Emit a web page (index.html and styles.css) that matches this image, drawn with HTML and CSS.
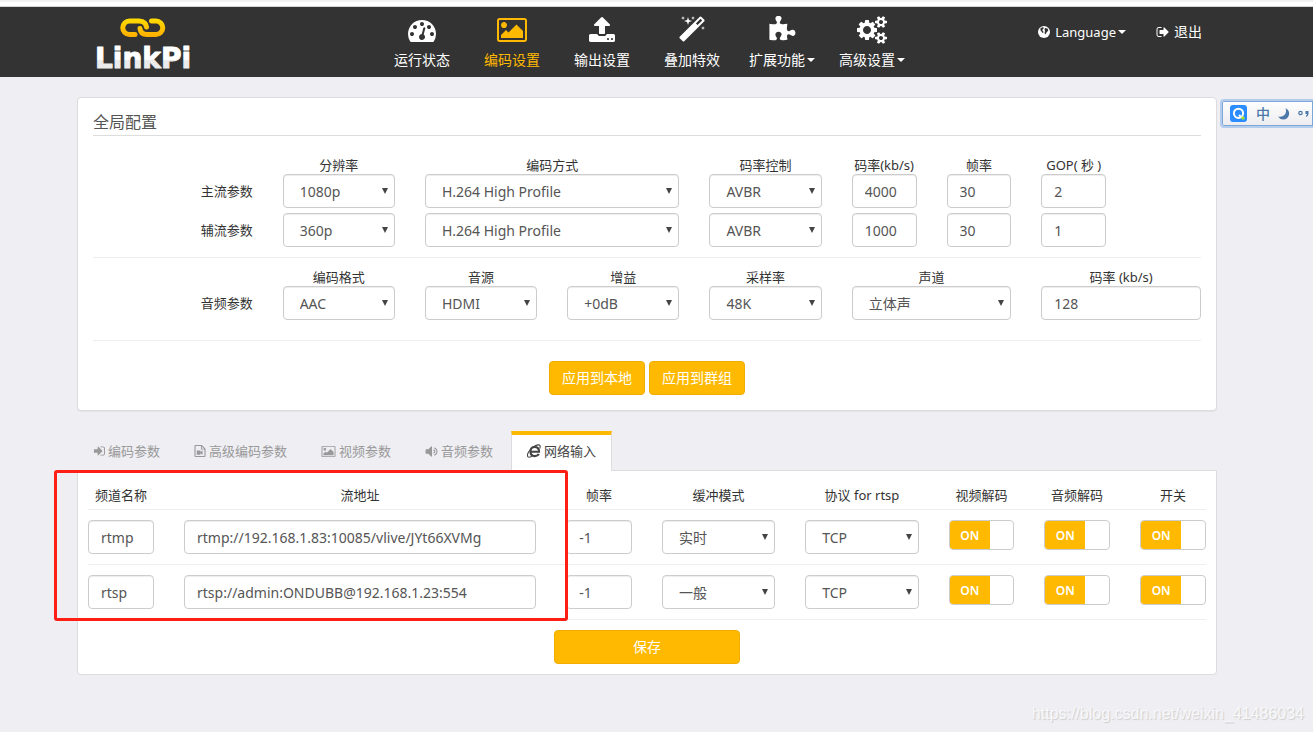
FILE: index.html
```html
<!DOCTYPE html>
<html lang="zh-CN">
<head>
<meta charset="utf-8">
<meta name="viewport" content="width=device-width, initial-scale=1">
<title>LinkPi</title>
<link rel="stylesheet" href="styles.css">
</head>
<body>
<svg class="defs" aria-hidden="true">
  <symbol id="i-picture" viewBox="0 0 1920 1792"><path d="M640 576q0 80-56 136t-136 56-136-56-56-136 56-136 136-56 136 56 56 136zm1024 384v448h-1408v-192l320-320 160 160 512-512zm96-704h-1600q-13 0-22.5 9.5t-9.5 22.5v1216q0 13 9.5 22.5t22.5 9.5h1600q13 0 22.5-9.5t9.5-22.5v-1216q0-13-9.5-22.5t-22.5-9.5zm160 32v1216q0 66-47 113t-113 47h-1600q-66 0-113-47t-47-113v-1216q0-66 47-113t113-47h1600q66 0 113 47t47 113z"/></symbol>
</svg>
<div class="topline"></div>
<header class="navbar">
  <div class="container nav-grid">
    <a class="logo" href="#" aria-label="LinkPi">
      <svg width="104" height="62" viewBox="0 0 104 62">
        <defs>
          <linearGradient id="gold" gradientUnits="userSpaceOnUse" x1="0" y1="2" x2="0" y2="22"><stop offset="0" stop-color="#ffe000"/><stop offset="1" stop-color="#ffae00"/></linearGradient>
          <linearGradient id="silver" gradientUnits="userSpaceOnUse" x1="0" y1="30" x2="0" y2="54"><stop offset=".6" stop-color="#fff"/><stop offset=".65" stop-color="#ebebec"/></linearGradient>
        </defs>
        <g fill="none" stroke="url(#gold)" stroke-width="5" stroke-linecap="round">
          <path d="M39 19.500H33.500a6.750 6.750 0 0 1 0-13.500H43Q50 6.500 50.500 12"/>
          <path d="M55.500 6H60a6.750 6.750 0 0 1 0 13.500H51Q44.500 19.500 44 13.500"/>
        </g>
        <text class="logo-text" x="-1" y="53">LinkPi</text>
      </svg>
    </a>
    <nav class="menu">
      <a href="#"><svg class="ic-lg" viewBox="0 0 1792 1792"><path d="M384 1152q0-53-37.5-90.5t-90.500-37.500-90.500 37.500-37.500 90.500 37.500 90.500 90.500 37.500 90.500-37.500 37.500-90.500zm192-448q0-53-37.500-90.500t-90.500-37.500-90.500 37.500-37.500 90.500 37.500 90.500 90.500 37.500 90.500-37.500 37.500-90.500zm428 481l101-382q6-26-7.500-48.500t-38.500-29.500-48 6.500-30 39.500l-101 382q-60 5-107 43.500t-63 98.500q-20 77 20 146t117 89 146-20 89-117q16-60-6-117t-72-91zm660-33q0-53-37.500-90.500t-90.500-37.500-90.500 37.500-37.500 90.500 37.500 90.500 90.500 37.500 90.500-37.500 37.500-90.500zm-640-640q0-53-37.500-90.500t-90.500-37.500-90.500 37.500-37.500 90.500 37.500 90.500 90.500 37.500 90.500-37.500 37.500-90.500zm448 192q0-53-37.500-90.500t-90.500-37.500-90.500 37.500-37.500 90.500 37.500 90.500 90.500 37.500 90.500-37.500 37.500-90.500zm320 448q0 261-141 483-19 29-54 29h-1402q-35 0-54-29-141-221-141-483 0-182 71-348t191-286 286-191 348-71 348 71 286 191 191 286 71 348z"/></svg><span>运行状态</span></a>
      <a href="#" class="active"><svg class="ic-lg wide"><use href="#i-picture"/></svg><span>编码设置</span></a>
      <a href="#"><svg class="ic-lg" viewBox="0 0 1792 1792"><path d="M1344 1472q0-26-19-45t-45-19-45 19-19 45 19 45 45 19 45-19 19-45zm256 0q0-26-19-45t-45-19-45 19-19 45 19 45 45 19 45-19 19-45zm128-224v320q0 40-28 68t-68 28h-1472q-40 0-68-28t-28-68v-320q0-40 28-68t68-28h427q21 56 70.500 92t110.500 36h256q61 0 110.500-36t70.500-92h427q40 0 68 28t28 68zm-325-648q-17 40-59 40h-256v448q0 26-19 45t-45 19h-256q-26 0-45-19t-19-45v-448h-256q-42 0-59-40-17-39 14-69l448-448q18-19 45-19t45 19l448 448q31 30 14 69z"/></svg><span>输出设置</span></a>
      <a href="#"><svg class="ic-lg" viewBox="0 0 1792 1792"><path d="M1254 581l293-293-107-107-293 293zm447-293q0 27-18 45l-1286 1286q-18 18-45 18t-45-18l-198-198q-18-18-18-45t18-45l1286-1286q18-18 45-18t45 18l198 198q18 18 18 45zm-1351-190l98 30-98 30-30 98-30-98-98-30 98-30 30-98zm350 162l196 60-196 60-60 196-60-196-196-60 196-60 60-196zm930 478l98 30-98 30-30 98-30-98-98-30 98-30 30-98zm-640-640l98 30-98 30-30 98-30-98-98-30 98-30 30-98z"/></svg><span>叠加特效</span></a>
      <a href="#"><svg class="ic-lg" viewBox="0 0 1792 1792"><path d="M1755 1083q0 81-44.500 135t-123.500 54q-41 0-77.500-17.500t-59-38-56.500-38-71-17.500q-110 0-110 124 0 39 16 115t15 115v5q-22 0-33 1-34 3-97.500 11.500t-115.500 13.500-98 5q-61 0-103-26.500t-42-83.500q0-37 17.500-71t38-56.500 38-59 17.500-77.500q0-79-54-123.500t-135-44.500q-84 0-143 45.500t-59 127.500q0 43 15 83t33.500 64.500 33.500 53 15 50.500q0 45-46 89-37 35-117 35-95 0-245-24-9-2-27.500-4t-27.500-4l-13-2q-1 0-3-1-2 0-2-1v-1024q2 1 17.500 3.500t34 5 21.500 3.500q150 24 245 24 80 0 117-35 46-44 46-89 0-22-15-50.500t-33.500-53-33.500-64.500-15-83q0-82 59-127.500t144-45.500q80 0 134 44.500t54 123.500q0 41-17.500 77.500t-38 59-38 56.500-17.500 71q0 57 42 83.500t103 26.500q64 0 180-15t163-17v2q-1 2-3.500 17.500t-5 34-3.500 21.500q-24 150-24 245 0 80 35 117 44 46 89 46 22 0 50.500-15t53-33.500 64.500-33.500 83-15q82 0 127.500 59t45.500 143z"/></svg><span class="caret">扩展功能</span></a>
      <a href="#"><svg class="ic-lg wide" viewBox="0 0 1920 1792"><path d="M896 896q0-106-75-181t-181-75-181 75-75 181 75 181 181 75 181-75 75-181zm768 512q0-52-38-90t-90-38-90 38-38 90q0 53 37.500 90.500t90.500 37.500 90.500-37.500 37.500-90.500zm0-1024q0-52-38-90t-90-38-90 38-38 90q0 53 37.500 90.500t90.500 37.500 90.500-37.500 37.500-90.500zm-384 421v185q0 10-7 19.500t-16 10.500l-155 24q-11 35-32 76 34 48 90 115 7 11 7 20 0 12-7 19-23 30-82.500 89.500t-78.500 59.500q-11 0-21-7l-115-90q-37 19-77 31-11 108-23 155-7 24-30 24h-186q-11 0-20-7.500t-10-17.500l-23-153q-34-10-75-31l-118 89q-7 7-20 7-11 0-21-8-144-133-144-160 0-9 7-19 10-14 41-53t47-61q-23-44-35-82l-152-24q-10-1-17-9.500t-7-19.500v-185q0-10 7-19.500t16-10.500l155-24q11-35 32-76-34-48-90-115-7-11-7-20 0-12 7-20 22-30 82-89t79-59q11 0 21 7l115 90q34-18 77-32 11-108 23-154 7-24 30-24h186q11 0 20 7.500t10 17.500l23 153q34 10 75 31l118-89q8-7 20-7 11 0 21 8 144 133 144 160 0 8-7 19-12 16-42 54t-45 60q23 48 34 82l152 23q10 2 17 10.500t7 19.500zm640 533v140q0 16-149 31-12 27-30 52 51 113 51 138 0 4-4 7-122 71-124 71-8 0-46-47t-52-68q-20 2-30 2t-30-2q-14 21-52 68t-46 47q-2 0-124-71-4-3-4-7 0-25 51-138-18-25-30-52-149-15-149-31v-140q0-16 149-31 13-29 30-52-51-113-51-138 0-4 4-7 4-2 35-20t59-34 30-16q8 0 46 46.500t52 67.500q20-2 30-2t30 2q51-71 92-112l6-2q4 0 124 70 4 3 4 7 0 25-51 138 17 23 30 52 149 15 149 31zm0-1024v140q0 16-149 31-12 27-30 52 51 113 51 138 0 4-4 7-122 71-124 71-8 0-46-47t-52-68q-20 2-30 2t-30-2q-14 21-52 68t-46 47q-2 0-124-71-4-3-4-7 0-25 51-138-18-25-30-52-149-15-149-31v-140q0-16 149-31 13-29 30-52-51-113-51-138 0-4 4-7 4-2 35-20t59-34 30-16q8 0 46 46.500t52 67.500q20-2 30-2t30 2q51-71 92-112l6-2q4 0 124 70 4 3 4 7 0 25-51 138 17 23 30 52 149 15 149 31z"/></svg><span class="caret">高级设置</span></a>
    </nav>
    <div class="user-links">
      <a href="#"><svg class="ic-globe" viewBox="0 0 12 12"><circle cx="6" cy="6" r="6"/><path class="cut" d="M2.500 2.200 4.500 1.200 6 1.800 5 3.200 4.200 4.300 5.200 5.300 5.500 6.500 4.500 7 3.500 5.500 2.500 4.500zM7 2 9.500 2.500 10.300 4.500 8.500 6.500 7.500 8.500 6.500 7 7 5 6.500 3.500z"/></svg><span class="caret lang">Language</span></a>
      <a href="#"><svg class="ic-out" viewBox="0 128 1664 1536"><path d="M704 1440q0 4 1 20t.5 26.500-3 23.500-10 19.500-20.500 6.500h-320q-119 0-203.500-84.500t-84.500-203.500v-704q0-119 84.500-203.500t203.500-84.500h320q13 0 22.500 9.500t9.500 22.500q0 4 1 20t.5 26.500-3 23.500-10 19.500-20.500 6.500h-320q-66 0-113 47t-47 113v704q0 66 47 113t113 47h312l11.500 1 11.500 3 8 5.500 7 9 2 13.500zm928-544q0 26-19 45l-544 544q-19 19-45 19t-45-19-19-45v-288h-448q-26 0-45-19t-19-45v-384q0-26 19-45t45-19h448v-288q0-26 19-45t45-19 45 19l544 544q19 19 19 45z"/></svg><span>退出</span></a>
    </div>
  </div>
</header>

<main class="container">
  <section class="panel config">
    <h1>全局配置</h1>
    <div class="row heads">
      <label class="w3 first" for="m-res">分辨率</label>
      <label class="w6" for="m-codec">编码方式</label>
      <label class="w3" for="m-rc">码率控制</label>
      <label class="w2" for="m-rate">码率(kb/s)</label>
      <label class="w2" for="m-fps">帧率</label>
      <label class="w2" for="m-gop">GOP( 秒 )</label>
    </div>
    <div class="row">
      <span class="row-label">主流参数</span>
      <div class="w3"><select id="m-res"><option>1080p</option></select></div>
      <div class="w6"><select id="m-codec"><option>H.264 High Profile</option></select></div>
      <div class="w3"><select id="m-rc"><option>AVBR</option></select></div>
      <div class="w2"><input type="text" id="m-rate" value="4000"></div>
      <div class="w2"><input type="text" id="m-fps" value="30"></div>
      <div class="w2"><input type="text" id="m-gop" value="2"></div>
    </div>
    <div class="row sub">
      <span class="row-label">辅流参数</span>
      <div class="w3"><select aria-label="辅流分辨率"><option>360p</option></select></div>
      <div class="w6"><select aria-label="辅流编码方式"><option>H.264 High Profile</option></select></div>
      <div class="w3"><select aria-label="辅流码率控制"><option>AVBR</option></select></div>
      <div class="w2"><input type="text" aria-label="辅流码率" value="1000"></div>
      <div class="w2"><input type="text" aria-label="辅流帧率" value="30"></div>
      <div class="w2"><input type="text" aria-label="辅流GOP" value="1"></div>
    </div>
    <hr>
    <div class="row">
      <label class="w3 first" for="a-fmt">编码格式</label>
      <label class="w3" for="a-src">音源</label>
      <label class="w3" for="a-gain">增益</label>
      <label class="w3" for="a-sr">采样率</label>
      <label class="w4" for="a-ch">声道</label>
      <label class="w4" for="a-rate">码率 (kb/s)</label>
    </div>
    <div class="row">
      <span class="row-label">音频参数</span>
      <div class="w3"><select id="a-fmt"><option>AAC</option></select></div>
      <div class="w3"><select id="a-src"><option>HDMI</option></select></div>
      <div class="w3"><select id="a-gain"><option>+0dB</option></select></div>
      <div class="w3"><select id="a-sr"><option>48K</option></select></div>
      <div class="w4"><select id="a-ch"><option>立体声</option></select></div>
      <div class="w4"><input type="text" id="a-rate" value="128"></div>
    </div>
    <hr class="loose">
    <div class="actions">
      <button type="button" class="btn">应用到本地</button>
      <button type="button" class="btn">应用到群组</button>
    </div>
  </section>

  <nav class="tabs">
    <a href="#"><svg class="ic-in" viewBox="0 128 1664 1536"><path d="M1312 896q0 26-19 45l-544 544q-19 19-45 19t-45-19-19-45v-288h-448q-26 0-45-19t-19-45v-384q0-26 19-45t45-19h448v-288q0-26 19-45t45-19 45 19l544 544q19 19 19 45zm352-352v704q0 119-84.500 203.500t-203.500 84.500h-320q-13 0-22.500-9.500t-9.500-22.500q0-4-1-20t-.5-26.500 3-23.500 10-19.500 20.500-6.500h320q66 0 113-47t47-113v-704q0-66-47-113t-113-47h-312l-11.500-1-11.500-3-8-5.500-7-9-2-13.500q0-4-1-20t-.5-26.500 3-23.500 10-19.500 20.500-6.500h320q119 0 203.500 84.500t84.500 203.500z"/></svg>编码参数</a>
    <a href="#"><svg class="ic-in" viewBox="0 0 12 13"><path fill-rule="evenodd" d="M1 0H8L12 4V12Q12 13 11 13H1Q0 13 0 12V1Q0 0 1 0zM1.200 1.200V11.800H10.800V5H7V1.200zM8 1.500V4H10.500zM2.500 6H6.500V7.500L8.800 6V10.500L6.500 9V10.500H2.500z"/></svg>高级编码参数</a>
    <a href="#"><svg class="ic-pic"><use href="#i-picture"/></svg>视频参数</a>
    <a href="#"><svg class="ic-vol" viewBox="0 128 1536 1536"><path d="M832 352v1088q0 26-19 45t-45 19-45-19l-333-333h-262q-26 0-45-19t-19-45v-384q0-26 19-45t45-19h262l333-333q19-19 45-19t45 19 19 45zm384 544q0 76-42.500 141.500t-112.500 93.500q-10 5-25 5-26 0-45-18.500t-19-45.500q0-21 12-35.500t29-25 34-23 29-36 12-56.500-12-56.500-29-36-34-23-29-25-12-35.500q0-27 19-45.500t45-18.500q15 0 25 5 70 27 112.500 93t42.500 142zm256 0q0 153-85 282.500t-225 188.500q-13 5-25 5-27 0-46-19t-19-45q0-39 39-59 56-29 76-44 74-54 115.500-135.500t41.500-173.500-41.500-173.500-115.500-135.500q-20-15-76-44-39-20-39-59 0-26 19-45t45-19q13 0 26 5 140 59 225 188.500t85 282.500z"/></svg>音频参数</a>
    <a href="#" class="active"><svg class="ic-ie" viewBox="0 0 13 13"><g fill="none" stroke="currentColor"><path stroke-width="2" d="M3.500 7.200H11.200Q11.200 2.800 7.200 2.800 3.200 2.800 3.200 7 3.200 11.200 7.200 11.200 10 11.200 10.900 9.200"/><path stroke-width="1" d="M11.800 4.200Q13 1 11 .8 8 .6 4 4.200-1 9.500 1 12 2 12.800 4.500 11.300"/></g></svg>网络输入</a>
  </nav>
  <section class="panel streams">
    <table>
      <thead>
        <tr><th class="c-name">频道名称</th><th class="c-url">流地址</th><th class="c-fps">帧率</th><th class="c-mode">缓冲模式</th><th class="c-mode">协议 for rtsp</th><th class="c-sw">视频解码</th><th class="c-sw">音频解码</th><th class="c-last">开关</th></tr>
      </thead>
      <tbody>
        <tr>
          <td><input type="text" aria-label="频道名称" value="rtmp"></td>
          <td><input type="text" aria-label="流地址" value="rtmp://192.168.1.83:10085/vlive/JYt66XVMg"></td>
          <td><input type="text" aria-label="帧率" value="-1"></td>
          <td><select aria-label="缓冲模式"><option>实时</option></select></td>
          <td><select aria-label="协议"><option>TCP</option></select></td>
          <td><label class="switch"><input type="checkbox" aria-label="视频解码" checked><span>ON</span></label></td>
          <td><label class="switch"><input type="checkbox" aria-label="音频解码" checked><span>ON</span></label></td>
          <td><label class="switch"><input type="checkbox" aria-label="开关" checked><span>ON</span></label></td>
        </tr>
        <tr>
          <td><input type="text" aria-label="频道名称" value="rtsp"></td>
          <td><input type="text" aria-label="流地址" value="rtsp://admin:ONDUBB@192.168.1.23:554"></td>
          <td><input type="text" aria-label="帧率" value="-1"></td>
          <td><select aria-label="缓冲模式"><option>一般</option></select></td>
          <td><select aria-label="协议"><option>TCP</option></select></td>
          <td><label class="switch"><input type="checkbox" aria-label="视频解码" checked><span>ON</span></label></td>
          <td><label class="switch"><input type="checkbox" aria-label="音频解码" checked><span>ON</span></label></td>
          <td><label class="switch"><input type="checkbox" aria-label="开关" checked><span>ON</span></label></td>
        </tr>
      </tbody>
    </table>
    <button type="button" class="btn save">保存</button>
    <div class="highlight"></div>
  </section>
</main>

<div class="ime">
  <svg width="18" height="18" viewBox="0 0 18 18"><rect width="17" height="17" rx="3" fill="#2b8cff"/><circle cx="8.500" cy="8.300" r="4.600" fill="none" stroke="#fff" stroke-width="2"/><path d="M9 10l2 2" stroke="#fff" stroke-width="2"/><circle cx="13" cy="13" r="1.700" fill="#a6e22e"/></svg>
  <span>中</span>
  <svg width="12" height="12" viewBox="0 0 12 12"><path d="M7.500 0Q12 2.500 11 7 9.500 11.500 5 11.500 1.500 11 0 8.500 4 9.500 6.500 7 9 4 7.500 0z" fill="#4a78a8"/></svg>
  <svg width="12" height="8" viewBox="0 0 12 8"><circle cx="2.500" cy="3" r="1.700" fill="none" stroke="#4a78a8" stroke-width="1.200"/><path d="M7.500 1h3v3q0 2-2.500 3v-1.500q1-.5 1-1.500h-1.500z" fill="#4a78a8"/></svg>
</div>
<div class="watermark">https://blog.csdn.net/weixin_41486034</div>
</body>
</html>
```
FILE: styles.css
```css
* { box-sizing: border-box; }

body {
  position: relative;
  min-height: 100vh;
  margin: 0;
  background: #eeeef3;
  color: #333;
  font: 13px/20px "Noto Sans", "Noto Sans CJK SC", sans-serif;
  overflow-x: hidden;
}

a { color: inherit; text-decoration: none; }
svg { display: block; flex: none; fill: currentColor; }
.defs { position: absolute; width: 0; height: 0; }

.topline {
  height: 7px;
  background: #fff;
  border-top: 2px solid #f2f2f2;
  border-bottom: 1px solid #d5d5d5;
}

/* header */
.navbar { background: #333; color: #fff; font-size: 14px; }
.container { width: calc(100% - 173px); max-width: 1140px; margin-left: max(77px, calc(50% - 580px)); }
.nav-grid { display: grid; grid-template-columns: 1fr auto 1fr; align-items: start; }
.logo { padding: 8px 0 0 19px; }
.logo svg { overflow: visible; }
.logo-text {
  font: bold 28px "DejaVu Sans", sans-serif;
  fill: url(#silver);
  stroke: url(#silver);
  stroke-width: 1px;
  stroke-linejoin: round;
}
.menu { display: flex; }
.menu a {
  display: flex;
  flex-direction: column;
  align-items: center;
  gap: 6px;
  width: 90px;
  padding: 9px 0 7px;
  white-space: nowrap;
}
.menu .active { color: #ffb900; }
.ic-lg { width: 28px; height: 28px; }
.ic-lg.wide { width: 30px; }
.caret { display: flex; align-items: center; gap: 2px; }
.caret::after {
  content: "";
  border: 4px solid transparent;
  border-top-color: currentColor;
  border-bottom: 0;
}
.user-links { display: flex; justify-content: flex-end; gap: 30px; padding: 15px 15px 0 0; }
.user-links a { display: flex; align-items: center; gap: 5px; }
.lang { font-size: 13px; }
.ic-globe { width: 12px; height: 12px; }
.cut { fill: #333; }
.ic-out { width: 13px; height: 12px; }

/* panels */
.panel { background: #fff; border: 1px solid #dcdcdf; border-radius: 4px; }
.config { margin-top: 20px; padding: 14px 15px 15px; box-shadow: 0 1px 1px rgba(0, 0, 0, .05); }
.config h1 {
  margin: 0;
  padding-bottom: 3px;
  border-bottom: 1px solid #ddd;
  color: #555;
  font-size: 16px;
  font-weight: 400;
  line-height: 20px;
}
hr { margin: 10px 0; border: 0; border-top: 1px solid #eee; }
hr.loose { margin: 20px 0; }

.row { display: grid; grid-template-columns: repeat(24, 1fr); margin: 0 -15px; }
.row > * { padding: 0 15px; min-width: 0; }
.row > label { text-align: center; line-height: 18px; padding: 0; white-space: nowrap; }
.heads { margin-top: 20px; }
.sub { margin-top: 5px; }
.w2 { grid-column-end: span 2; }
.w3 { grid-column-end: span 3; }
.w4 { grid-column-end: span 4; }
.w6 { grid-column-end: span 6; }
.first { grid-column-start: 5; }
.row-label { grid-column: 2 / 5; line-height: 34px; text-align: right; }

input[type="text"], select {
  display: block;
  width: 100%;
  height: 34px;
  padding: 0 12px;
  border: 1px solid #ccc;
  border-radius: 4px;
  background-color: #fff;
  box-shadow: inset 0 1px 1px rgba(0, 0, 0, .075);
  color: #555;
  font: 14px/20px "Noto Sans", "Noto Sans CJK SC", sans-serif;
}
select {
  appearance: none;
  padding: 1px 16px 0;
  background-image: url("data:image/svg+xml,%3Csvg xmlns='http://www.w3.org/2000/svg' width='6' height='6'%3E%3Cpath d='M0 0h6L3 6z' fill='%23444'/%3E%3C/svg%3E");
  background-repeat: no-repeat;
  background-position: right 6px top 13px;
}

.actions { display: flex; justify-content: center; gap: 4px; }
.btn {
  height: 34px;
  padding: 0 12px;
  border: 1px solid #f0ad00;
  border-radius: 4px;
  background: #ffb900;
  color: #fff;
  font: 14px/20px "Noto Sans", "Noto Sans CJK SC", sans-serif;
}

/* tabs */
.tabs { display: flex; gap: 2px; margin-top: 20px; color: #999; }
.tabs a {
  display: flex;
  align-items: center;
  gap: 3px;
  height: 40px;
  margin-bottom: -1px;
  padding: 0 15px 4px;
  border: 1px solid transparent;
  border-top-width: 4px;
  border-bottom: 0;
}
.tabs .active {
  z-index: 1;
  background: #fff;
  border: 1px solid #ddd;
  border-top: 4px solid #ffb900;
  border-bottom: 0;
  color: #444;
}
.ic-in { width: 12px; height: 12px; }
.ic-pic { width: 15px; height: 13px; }
.ic-vol { width: 13px; height: 13px; }
.ic-ie { width: 14px; height: 14px; }

.streams { position: relative; padding: 14px 10px 10px; border-radius: 0 0 4px 4px; }
table { width: 100%; border-collapse: collapse; table-layout: fixed; }
th { padding: 0 0 4px; font-weight: 400; white-space: nowrap; }
td { padding: 10px 15px; vertical-align: top; }
tr { border-bottom: 1px solid #eee; }
th:first-child { padding-right: 15px; }
th:last-child { padding-left: 15px; }
td:first-child { padding-left: 0; }
td:last-child { padding-right: 0; }
.c-name, .c-last { width: 7.25%; }
.c-url { width: 34.2%; }
.c-fps, .c-sw { width: 8.56%; }
.c-mode { width: 12.83%; }

.switch {
  position: relative;
  display: flex;
  height: 30px;
  overflow: hidden;
  border: 1px solid #ccc;
  border-radius: 4px;
}
.switch input { position: absolute; inset: 0; margin: 0; opacity: 0; }
.switch span {
  width: 63%;
  background: #ffb900;
  color: #fff;
  font-size: 12px;
  font-weight: 600;
  line-height: 29px;
  text-align: center;
}
.save { display: block; width: 186px; margin: 10px auto 0; }

/* overlays */
.highlight {
  position: absolute;
  z-index: 2;
  top: -1px;
  left: -24px;
  width: 514px;
  height: 151px;
  border: 3px solid #ff1e14;
  border-radius: 3px;
  pointer-events: none;
}
.ime {
  position: absolute;
  top: 99px;
  right: 0;
  display: flex;
  align-items: center;
  gap: 8px;
  width: 93px;
  height: 29px;
  padding-left: 8px;
  overflow: hidden;
  border: 2px solid #b4cdec;
  border-right: 0;
  border-radius: 4px 0 0 4px;
  background: linear-gradient(#fff, #ececf0);
  box-shadow: inset 0 0 0 1px #7da7d8;
  color: #4a78a8;
  font-size: 14px;
  font-weight: 500;
}
.watermark {
  position: absolute;
  right: 9px;
  bottom: 8px;
  color: #f8f8fa;
  font: 16px/20px "Liberation Sans", sans-serif;
  text-shadow: 1px 1px 1px #ccc;
}
```
